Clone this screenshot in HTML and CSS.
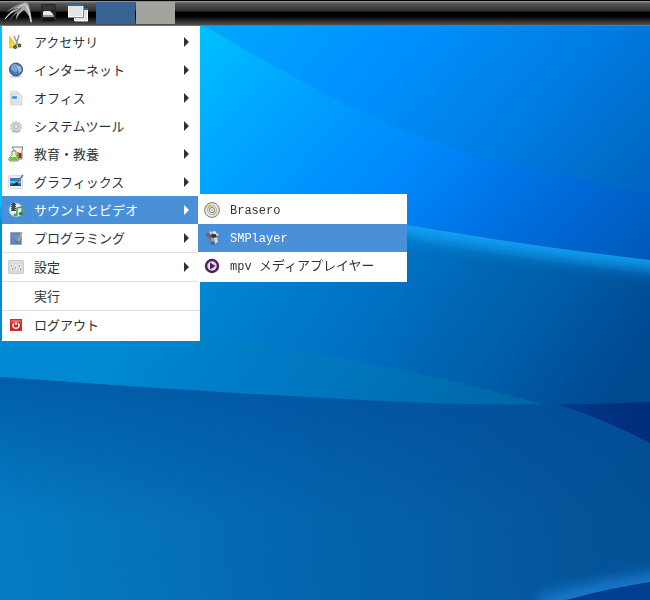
FILE: index.html
```html
<!DOCTYPE html>
<html lang="ja">
<head>
    <meta charset="UTF-8">
    <meta name="viewport" content="width=device-width, initial-scale=1.0">
    <title>LXDE</title>
    <link rel="stylesheet" href="styles.css">
</head>
<body>
    <svg class="wallpaper" viewBox="0 0 650 600" preserveAspectRatio="xMidYMid slice" aria-hidden="true">
        <defs>
            <linearGradient id="sky" gradientUnits="userSpaceOnUse" x1="190" y1="50" x2="540" y2="380">
                <stop offset="0" stop-color="#00beff"/>
                <stop offset="0.25" stop-color="#00a0ff"/>
                <stop offset="0.5" stop-color="#0088fa"/>
                <stop offset="0.75" stop-color="#006cdc"/>
                <stop offset="1" stop-color="#0058b8"/>
            </linearGradient>
            <linearGradient id="sky-top" gradientUnits="userSpaceOnUse" x1="240" y1="-20" x2="560" y2="260">
                <stop offset="0" stop-color="#00a8ff"/>
                <stop offset="0.35" stop-color="#0092ff"/>
                <stop offset="0.7" stop-color="#007ee4"/>
                <stop offset="1" stop-color="#0068c4"/>
            </linearGradient>
            <linearGradient id="wave" gradientUnits="userSpaceOnUse" x1="200" y1="230" x2="560" y2="480">
                <stop offset="0" stop-color="#008cd8"/>
                <stop offset="0.4" stop-color="#0072c4"/>
                <stop offset="0.7" stop-color="#0060ac"/>
                <stop offset="1" stop-color="#004890"/>
            </linearGradient>
            <linearGradient id="sheen" x1="0" y1="0" x2="1" y2="0">
                <stop offset="0" stop-color="#0080c8" stop-opacity="0.3"/>
                <stop offset="1" stop-color="#0080b0" stop-opacity="0.4"/>
            </linearGradient>
            <linearGradient id="deep" gradientUnits="userSpaceOnUse" x1="0" y1="520" x2="650" y2="470">
                <stop offset="0" stop-color="#047cc4"/>
                <stop offset="0.5" stop-color="#0464ac"/>
                <stop offset="1" stop-color="#045094"/>
            </linearGradient>
            <linearGradient id="shade" x1="0" y1="0" x2="0" y2="1">
                <stop offset="0" stop-color="#004898" stop-opacity="0.6"/>
                <stop offset="1" stop-color="#004898" stop-opacity="0"/>
            </linearGradient>
            <linearGradient id="corner" x1="0" y1="0" x2="1" y2="0">
                <stop offset="0" stop-color="#003c88"/>
                <stop offset="1" stop-color="#002c7c"/>
            </linearGradient>
            <filter id="soft" x="-10%" y="-80%" width="120%" height="260%">
                <feGaussianBlur stdDeviation="8"/>
            </filter>
            <clipPath id="wave-clip">
                <path d="M0 207Q220 196 407 225Q530 246 650 260V600H0z"/>
            </clipPath>
            <clipPath id="deep-clip">
                <path d="M0 377Q200 392 400 402Q530 407 650 402V600H0z"/>
            </clipPath>
        </defs>
        <path fill="url(#sky)" d="M0 0H650V600H0z"/>
        <path fill="url(#sky-top)" d="M205 26Q300 84 384 122Q490 167 650 192V0H205z"/>
        <g clip-path="url(#wave-clip)">
            <path fill="url(#wave)" d="M0 190H650V600H0z"/>
            <path fill="none" stroke="#18aaff" stroke-width="18" filter="url(#soft)" d="M-40 207Q220 196 407 225Q530 246 690 264"/>
            <path fill="url(#sheen)" d="M0 326Q130 326 200 335Q400 363 545 405V410H0z"/>
        </g>
        <g clip-path="url(#deep-clip)">
            <path fill="url(#deep)" d="M0 370H650V600H0z"/>
            <path fill="url(#shade)" d="M0 370H650V520H0z"/>
            <path fill="url(#corner)" d="M545 400Q600 417 650 443V400z"/>
            <path fill="none" stroke="#2088e0" stroke-width="14" filter="url(#soft)" d="M540 606Q600 590 670 580"/>
            <path fill="#003f90" d="M566 600Q610 588 650 582V600z"/>
        </g>
    </svg>

    <header class="panel">
        <button class="panel-button" aria-label="メニュー">
            <svg width="28" height="24" viewBox="0 0 28 24">
                <path fill="#a8a8a8" d="M0 19Q7 8 21 1L24 2Q27 10 28 23Q25 13 20 9Q15 12 12 19Q12 13 15 9Q7 11 0 19z"/>
                <path fill="#8c8c8c" d="M1 12Q10 4 21 1L17 6Q8 7 1 12zM5 21Q10 11 19 5L15 11Q9 14 5 21z"/>
                <path fill="none" stroke="#e4e4e4" d="M1 18Q10 7 21 3"/>
                <path fill="none" stroke="#d8d8d8" stroke-width="1.500" d="M22 4Q26 11 27 21"/>
                <path fill="none" stroke="#444" stroke-width="0.800" d="M6 18Q10 12 17 7M5 11L14 7"/>
            </svg>
        </button>
        <button class="panel-button" aria-label="ファイルマネージャ">
            <svg width="20" height="20" viewBox="0 0 20 20">
                <rect x="1" y="1" width="15" height="18" rx="2" fill="#242424"/>
                <path fill="#363636" d="M2 2H15V7H2z"/>
                <path fill="#e8e8e8" d="M4 8H10L13 11V13H3V9z"/>
                <path fill="#999" d="M3 12H14V14H3z"/>
                <path fill="#111" d="M3 15H14V18H3z"/>
            </svg>
        </button>
        <button class="panel-button" aria-label="すべてのウィンドウを最小化">
            <svg width="20" height="18" viewBox="0 0 20 18">
                <rect x="6.500" y="4.500" width="13" height="12" fill="#e4e4e2" stroke="#fff"/>
                <path fill="#3465a4" d="M6 4H20V6H6z"/>
                <rect x="0.500" y="0.500" width="14" height="12" fill="#e4e4e2" stroke="#fff"/>
                <path fill="#3465a4" d="M0 0H15V2H0z"/>
                <path fill="none" stroke="#888" d="M0 13.500H15.500V2M7 17.500H20"/>
            </svg>
        </button>
        <div class="pager">
            <button class="desk desk-active" aria-label="デスクトップ 1"></button>
            <button class="desk" aria-label="デスクトップ 2"></button>
        </div>
    </header>

    <nav class="menu">
        <ul class="menu-list">
            <li>
                <button class="item">
                    <svg class="icon" viewBox="0 0 16 16">
                        <path fill="#f0cc18" stroke="#dcb820" stroke-width="0.500" d="M1.500 2V14H10z"/>
                        <path fill="#fff0a0" d="M3.500 8V12H6z"/>
                        <path stroke="#999" stroke-width="1.500" fill="none" d="M6 2L10 11M11 1L8 11"/>
                        <circle cx="7" cy="13" r="1.300" fill="#8c8060" stroke="#554c34" stroke-width="1.200"/>
                        <circle cx="11.500" cy="11.500" r="1.300" fill="#8c8060" stroke="#554c34" stroke-width="1.200"/>
                    </svg>
                    <span class="label">アクセサリ</span>
                    <svg class="arrow" viewBox="0 0 6 10"><path d="M0 0L5 5L0 10z"/></svg>
                </button>
            </li>
            <li>
                <button class="item">
                    <svg class="icon" viewBox="0 0 16 16">
                        <ellipse cx="8" cy="14.500" rx="6" ry="1" fill="#ccc"/>
                        <circle cx="8" cy="7.500" r="6.500" fill="#4674b0" stroke="#2c4c7c"/>
                        <path fill="#7ca4d0" d="M3 4Q6 1 9 2L8 5L10 8L8 11L5 9L3 8z"/>
                        <path fill="#a4c0e0" d="M9 3L13 5L13.500 9L11 11L10 7L8 5z"/>
                    </svg>
                    <span class="label">インターネット</span>
                    <svg class="arrow" viewBox="0 0 6 10"><path d="M0 0L5 5L0 10z"/></svg>
                </button>
            </li>
            <li>
                <button class="item">
                    <svg class="icon" viewBox="0 0 16 16">
                        <path fill="#e6e6e6" stroke="#d4d4d4" stroke-width="0.600" d="M2 1H9L11 3V13H2z"/>
                        <path fill="#e8e8e8" stroke="#c4c4c4" stroke-width="0.600" d="M4 4H12L14 6V15H3z"/>
                        <path fill="#64a8dc" d="M4 6H9V9H4z"/>
                        <path fill="#2c80c4" d="M5 7H8V8H5z"/>
                        <path stroke="#ccc" stroke-width="0.500" d="M4 11H12M4 13H12M10 8H12"/>
                    </svg>
                    <span class="label">オフィス</span>
                    <svg class="arrow" viewBox="0 0 6 10"><path d="M0 0L5 5L0 10z"/></svg>
                </button>
            </li>
            <li>
                <button class="item">
                    <svg class="icon" viewBox="0 0 16 16">
                        <circle cx="8" cy="9" r="5" fill="#d4d4d4" stroke="#c4c4c4" stroke-width="2" stroke-dasharray="2 1.140"/>
                        <circle cx="8" cy="9" r="5" fill="#d0d0d0"/>
                        <circle cx="8" cy="8.500" r="2" fill="#eee" stroke="#b4b4b4"/>
                        <path fill="none" stroke="#aaa" d="M4 13Q8 15 12 13"/>
                    </svg>
                    <span class="label">システムツール</span>
                    <svg class="arrow" viewBox="0 0 6 10"><path d="M0 0L5 5L0 10z"/></svg>
                </button>
            </li>
            <li>
                <button class="item">
                    <svg class="icon" viewBox="0 0 16 16">
                        <path fill="#f4f2ec" stroke="#686050" stroke-width="0.800" d="M4 1H15L14 4V13H6V4z"/>
                        <path fill="#e07838" d="M9 6H11V12H9z"/>
                        <path fill="#6c3c24" d="M11 7H13.500V12H11z"/>
                        <path fill="#e8f4e0" stroke="#607058" stroke-width="0.800" d="M4 5H8V9L11 13Q11 15 9 15H2Q0 14 1 12L4 9z"/>
                        <path fill="#60cc30" d="M3 11H9L10 13Q9 14.500 8 14.500H2.500Q1 13 2 12z"/>
                    </svg>
                    <span class="label">教育・教養</span>
                    <svg class="arrow" viewBox="0 0 6 10"><path d="M0 0L5 5L0 10z"/></svg>
                </button>
            </li>
            <li>
                <button class="item">
                    <svg class="icon" viewBox="0 0 16 16">
                        <rect x="0.500" y="1.500" width="14" height="13" rx="1" fill="#f0f0f0" stroke="#ddd"/>
                        <path fill="#2880c8" d="M2 4H13V12H2z"/>
                        <path fill="#68bce8" d="M2 7H13V9H2z"/>
                        <path fill="#184c70" d="M2 11Q7 9 13 11V12H2z"/>
                        <path stroke="#777" stroke-width="1.500" d="M15 1L9 9"/>
                        <path fill="#222" d="M9 8L10 10Q8 12 5 11Q7 10 7 9z"/>
                    </svg>
                    <span class="label">グラフィックス</span>
                    <svg class="arrow" viewBox="0 0 6 10"><path d="M0 0L5 5L0 10z"/></svg>
                </button>
            </li>
            <li class="has-submenu">
                <button class="item selected" aria-expanded="true">
                    <svg class="icon" viewBox="0 0 16 16">
                        <circle cx="8" cy="8" r="6.800" fill="#e8eeec" stroke="#b4c4c4"/>
                        <path fill="#3c4c5c" d="M3 1H8V9H3z"/>
                        <path stroke="#b8c4cc" stroke-dasharray="1 1" d="M3.500 1V9M7.500 1V9"/>
                        <path fill="none" stroke="#40984c" stroke-width="1.500" d="M9 13V6L14 5V11"/>
                        <ellipse cx="7.500" cy="13" rx="2" ry="1.500" fill="#40a84c"/>
                        <ellipse cx="12.800" cy="11.500" rx="2" ry="1.500" fill="#288038"/>
                    </svg>
                    <span class="label">サウンドとビデオ</span>
                    <svg class="arrow" viewBox="0 0 6 10"><path d="M0 0L5 5L0 10z"/></svg>
                </button>
                <ul class="menu-list submenu">
                    <li>
                        <button class="item">
                            <svg class="icon" viewBox="0 0 16 16">
                                <circle cx="8" cy="8" r="7.400" fill="#e8e8e4" stroke="#777"/>
                                <path fill="#e4dc70" d="M8 8L2 6Q3 2 7 1.500zM8 8L13 11Q12 14 9 14z"/>
                                <circle cx="8" cy="8" r="4.500" fill="none" stroke="#999" stroke-width="0.800"/>
                                <circle cx="8" cy="8" r="2.500" fill="#fff" stroke="#777"/>
                                <circle cx="8" cy="8" r="0.800" fill="#888"/>
                            </svg>
                            <span class="label"><span class="latin">Brasero</span></span>
                        </button>
                    </li>
                    <li>
                        <button class="item selected">
                            <svg class="icon" viewBox="0 0 16 16">
                                <path fill="#687080" d="M1 4L6 3L8 8L13 6L14 12L11 15L7 12L5 8z"/>
                                <circle cx="4" cy="5" r="2" fill="#8c5c54"/>
                                <circle cx="7" cy="2.800" r="1.600" fill="#ccc"/>
                                <circle cx="10.500" cy="2.500" r="1.600" fill="#eee"/>
                                <circle cx="13" cy="4.500" r="1.500" fill="#ccc"/>
                                <path fill="#333" d="M6 5L11 4L13 7L9 8z"/>
                                <path fill="#e88c58" d="M7 8H10V12H7z"/>
                                <path fill="#d4d8e0" d="M10 8L13 7L14 12L11 14z"/>
                                <path fill="#2868b8" d="M8 11L11 13L9 15L6 13z"/>
                            </svg>
                            <span class="label"><span class="latin">SMPlayer</span></span>
                        </button>
                    </li>
                    <li>
                        <button class="item">
                            <svg class="icon" viewBox="0 0 16 16">
                                <circle cx="8" cy="8" r="7.200" fill="#4e2058"/>
                                <circle cx="8" cy="8" r="4.700" fill="#e8dcea"/>
                                <path fill="#552060" d="M6 4.500V11.500L11.500 8z"/>
                            </svg>
                            <span class="label"><span class="latin">mpv </span>メディアプレイヤー</span>
                        </button>
                    </li>
                </ul>
            </li>
            <li>
                <button class="item">
                    <svg class="icon" viewBox="0 0 16 16">
                        <path fill="#5c84b8" stroke="#8ca4c4" d="M2.500 2.500H13.500V14.500H2.500z"/>
                        <path fill="none" stroke="#84a4cc" stroke-width="0.600" d="M4 12L11 4M4 6H9V12M4 4L12 13"/>
                        <path stroke="#d8b458" stroke-width="1.500" d="M14 2L10 12"/>
                        <path stroke="#604818" d="M10 11L9.500 13"/>
                    </svg>
                    <span class="label">プログラミング</span>
                    <svg class="arrow" viewBox="0 0 6 10"><path d="M0 0L5 5L0 10z"/></svg>
                </button>
            </li>
            <li class="separated">
                <button class="item">
                    <svg class="icon" viewBox="0 0 16 16">
                        <rect x="0.500" y="1.500" width="15" height="13" rx="1.500" fill="#dcdcd8" stroke="#ccccc8"/>
                        <path stroke="#ececea" stroke-width="2" d="M4 5V11M8 5V11M12 5V11"/>
                        <path stroke="#a8a8a8" d="M3.500 6V8M7.500 8V10M11.500 6V8M4.500 9V11M12.500 9V11"/>
                    </svg>
                    <span class="label">設定</span>
                    <svg class="arrow" viewBox="0 0 6 10"><path d="M0 0L5 5L0 10z"/></svg>
                </button>
            </li>
            <li class="separated">
                <button class="item">
                    <span class="icon"></span>
                    <span class="label">実行</span>
                </button>
            </li>
            <li class="separated">
                <button class="item">
                    <svg class="icon" viewBox="0 0 16 16">
                        <rect x="2.500" y="2.500" width="11" height="11" fill="#dc2424" stroke="#c83030"/>
                        <path fill="#ec6058" d="M3 3H13V5H3z"/>
                        <path fill="none" stroke="#fff" stroke-width="1.400" d="M6 6Q4 8 5.500 10.200Q8 12.300 10.500 10.200Q12 8 10 6M8 4.500V8"/>
                    </svg>
                    <span class="label">ログアウト</span>
                </button>
            </li>
        </ul>
    </nav>
</body>
</html>
```
FILE: styles.css
```css
* {
    box-sizing: border-box;
}
body {
    margin: 0;
    min-height: 100vh;
    background-color: #0070c0;
    font-family: "Noto Sans CJK JP", sans-serif;
    font-size: 13px;
    color: #2e3436;
}
button {
    margin: 0;
    padding: 0;
    border: none;
    background: none;
    font: inherit;
    color: inherit;
}
svg {
    display: block;
}
.wallpaper {
    position: fixed;
    inset: 0;
    width: 100%;
    height: 100%;
    z-index: -1;
}

/* Panel */
.panel {
    display: flex;
    align-items: center;
    gap: 8px;
    height: 26px;
    padding: 0 4px;
    border-top: 1px solid #000;
    border-bottom: 1px solid #77706c;
    background: linear-gradient(#908c90 0, #908c90 1px, #585858 2px, #303030 10px, #000 11px, #000 15px, #505050 24px);
}
.pager {
    display: flex;
    gap: 1px;
}
.desk {
    width: 39px;
    height: 22px;
    background-color: #a4a49f;
}
.desk-active {
    background-color: #386494;
}

/* Menu */
.menu {
    width: 198px;
    margin-left: 2px;
}
.menu-list {
    margin: 0;
    padding: 2px 0;
    list-style: none;
    background-color: #fff;
}
.item {
    display: flex;
    align-items: center;
    gap: 10px;
    width: 100%;
    height: 28px;
    padding: 0 10px 0 6px;
    text-align: left;
    white-space: nowrap;
}
.item:hover,
.selected {
    background-color: #4a90d9;
    color: #fff;
}
.icon {
    flex: none;
    width: 16px;
    height: 16px;
}
.label {
    flex: 1;
    line-height: 20px;
    white-space: pre;
}
.latin {
    font-family: "Liberation Mono", monospace;
    font-size: 12px;
}
.arrow {
    width: 6px;
    height: 10px;
    fill: currentColor;
}
.separated {
    border-top: 1px solid #e0e0e0;
}
.has-submenu {
    position: relative;
}
.submenu {
    position: absolute;
    top: -2px;
    left: calc(100% - 2px);
    width: 209px;
}
```
